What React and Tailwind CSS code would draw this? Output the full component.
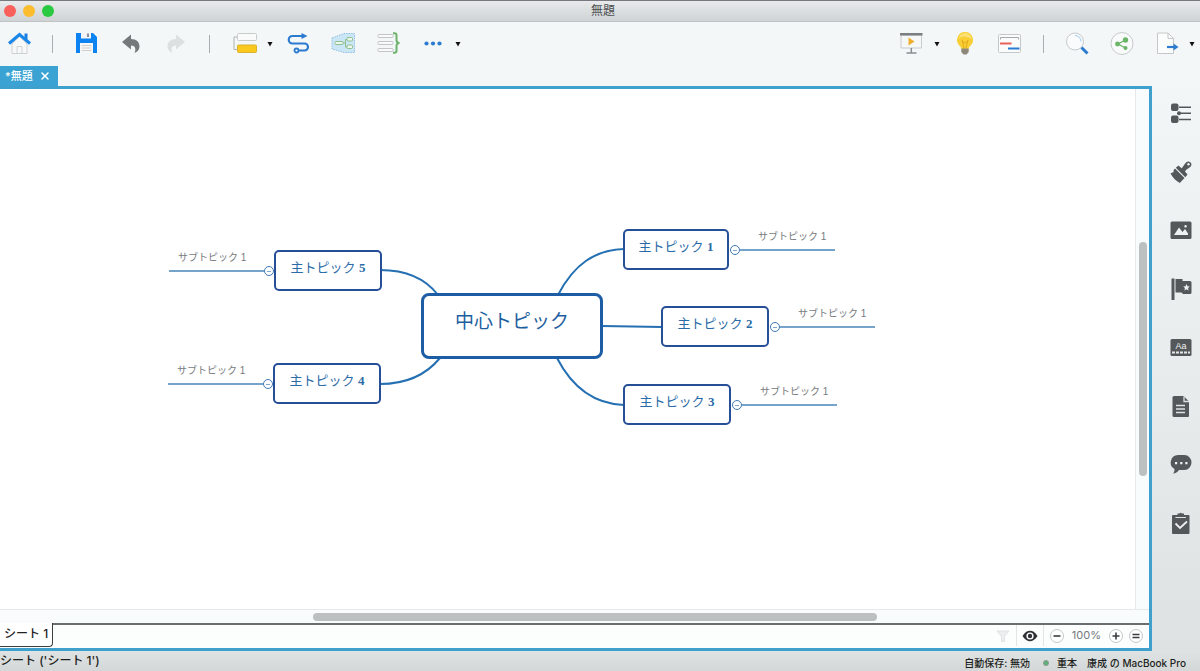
import { X } from "lucide-react";

const topics = [
  { id: 1, label: "主トピック", x: 623, y: 140, w: "w-[106px]" },
  { id: 2, label: "主トピック", x: 661, y: 217, w: "w-[108px]" },
  { id: 3, label: "主トピック", x: 623, y: 295, w: "w-[108px]" },
  { id: 4, label: "主トピック", x: 273, y: 274, w: "w-[108px]" },
  { id: 5, label: "主トピック", x: 274, y: 161, w: "w-[108px]" },
];

// x, y is the left end of the underline, cx the centre of the fold button
const subtopics = [
  { id: 1, x: 740, y: 161, cx: 735, pad: "pl-[18px]" },
  { id: 2, x: 780, y: 238, cx: 775, pad: "pl-[18px]" },
  { id: 3, x: 742, y: 316, cx: 737, pad: "pl-[18px]" },
  { id: 4, x: 168, y: 295, cx: 268, pad: "pl-[9px]" },
  { id: 5, x: 169, y: 182, cx: 269, pad: "pl-[9px]" },
];

function ToolButton({ label, children }) {
  return (
    <button type="button" aria-label={label} className="w-6 h-6 shrink-0">
      <svg viewBox="0 0 24 24" className="w-6 h-6" fill="none">
        {children}
      </svg>
    </button>
  );
}

function Caret({ label }) {
  return (
    <button type="button" aria-label={label} className="w-2 h-6 shrink-0 flex items-center justify-center">
      <svg viewBox="0 0 8 8" className="w-2 h-2">
        <path d="M1.5 2h5L4 6.5z" fill="#111" />
      </svg>
    </button>
  );
}

function Divider() {
  return <div className="w-px h-[18px] bg-[#a9adaf]" />;
}

function Toolbar() {
  return (
    <header className="h-11 flex items-center justify-between pl-[7px] pr-1">
      <div className="flex items-center">
        <div className="flex items-center gap-[21px]">
          <ToolButton label="ホーム">
            <path d="M5 12v9.5h15V12l-7.500-8z" fill="#f7f8f8" stroke="#cfd2d4" />
            <path d="M10 21.500v-7h5v7" stroke="#cfd2d4" />
            <path d="M17.500 1.500h3v6h-3z" fill="#1a7fe0" />
            <path d="M2 11.500 12.500 2.500 23 11.500" stroke="#1a86e8" strokeWidth="3" />
          </ToolButton>
          <Divider />
          <ToolButton label="保存">
            <path d="M2 1h17l4 4v16H2z" fill="#0d83f2" />
            <path d="M7 1h10v5.500H7z" fill="#f3f5f6" />
            <path d="M13 1.500h2V5h-2z" fill="#8a9298" />
            <path d="M6 11h13v10H6z" fill="#f6f7f7" />
            <path d="M7.500 13.500h10M7.500 16h10M7.500 18.500h10" stroke="#cfcfcf" />
          </ToolButton>
          <ToolButton label="元に戻す">
            <path d="M3 10 12 2.500v4.500c5.500 0 8.500 3 8.500 7.500 0 3-1.500 5-5 6.500 2-4.500.5-7.500-3.500-7.500v4z" fill="#75797b" />
          </ToolButton>
          <ToolButton label="やり直し">
            <path d="M21 10 12 2.500v4.500C6.500 7 3.500 10 3.500 14.500c0 3 1.500 5 5 6.500-2-4.500-.5-7.500 3.500-7.500v4z" fill="#dde0e1" />
          </ToolButton>
          <Divider />
        </div>

        <div className="flex items-center gap-3 pl-[23px]">
          <div className="flex items-center gap-[9px]">
            <ToolButton label="トピック">
              <path d="M5 5H1v12.500h4" stroke="#b0b3b5" />
              <rect x="4.500" y="1.500" width="19" height="7" rx="1" fill="#fafafa" stroke="#c9cccd" />
              <rect x="4.500" y="13" width="19" height="7.500" rx="1" fill="#fbc91d" stroke="#dbb12e" />
            </ToolButton>
            <Caret label="トピックのメニュー" />
          </div>
          <div className="flex items-center gap-[21px]">
            <ToolButton label="関連">
              <path d="M16 4H6.500a3.700 3.700 0 0 0 0 7.500h12a3.500 3.500 0 0 1 0 7H13" stroke="#2b7cd0" strokeWidth="2.200" />
              <path d="M15.500 1 21.500 4l-6 3z" fill="#2b7cd0" />
              <circle cx="10.500" cy="18.500" r="2" fill="#fff" stroke="#2b7cd0" strokeWidth="1.800" />
            </ToolButton>
            <ToolButton label="境界">
              <path d="M1 6 13 1.500h10.500v19H13L1 17z" fill="#cbe6f6" stroke="#8fbfe0" strokeDasharray="1.500 1" />
              <path d="M12 11h2.500M17 7.500h-2.500v7.500H17" stroke="#8cc08d" />
              <rect x="4" y="9.500" width="8" height="3" rx="1" fill="#eef7ee" stroke="#8cc08d" />
              <rect x="16" y="5.500" width="5.500" height="3.500" rx="1" fill="#eef7ee" stroke="#8cc08d" />
              <rect x="16" y="13" width="5.500" height="3.500" rx="1" fill="#eef7ee" stroke="#8cc08d" />
            </ToolButton>
            <ToolButton label="要約">
              <rect x="2" y="2.500" width="15" height="3" rx="1" fill="#fafafa" stroke="#c3c6c8" />
              <rect x="2" y="9.500" width="15" height="3" rx="1" fill="#fafafa" stroke="#c3c6c8" />
              <rect x="2" y="16.500" width="15" height="3" rx="1" fill="#fafafa" stroke="#c3c6c8" />
              <path d="M17 1.200h1.500q2 0 2 2v5q0 2.800 3 2.800-3 0-3 2.800v5q0 2-2 2H17" stroke="#6db36b" strokeWidth="2" />
            </ToolButton>
            <div className="flex items-center gap-[9px]">
              <ToolButton label="その他">
                <circle cx="5.500" cy="11.500" r="2.100" fill="#2b7cd0" />
                <circle cx="12" cy="11.500" r="2.100" fill="#2b7cd0" />
                <circle cx="18.500" cy="11.500" r="2.100" fill="#2b7cd0" />
              </ToolButton>
              <Caret label="その他のメニュー" />
            </div>
          </div>
        </div>
      </div>

      <div className="flex items-center gap-3">
        <div className="flex items-center gap-[9px]">
          <ToolButton label="プレゼンテーション">
            <path d="M1 3h20.500v13H1z" fill="#f6f7f7" stroke="#c9cccd" />
            <path d="M0 1h22.500v2.500H0z" fill="#7b7f82" />
            <path d="M8.500 5.500 14.500 9.500l-6 4z" fill="#eeae2c" />
            <path d="M11.300 16v5M6.500 21h10" stroke="#8a8e91" strokeWidth="1.500" />
          </ToolButton>
          <Caret label="プレゼンテーションのメニュー" />
        </div>
        <div className="flex items-center gap-[21px]">
          <ToolButton label="アイデア">
            <path d="M12 0a8 8 0 0 1 5 14.200c-1 .8-1.200 1.800-1.200 2.800H8.200c0-1-.2-2-1.200-2.800A8 8 0 0 1 12 0z" fill="#f9cf35" />
            <path d="M12 1a7 7 0 0 0-6.500 6c2-3.500 8-3.500 13 0a7 7 0 0 0-6.500-6z" fill="#fbe076" />
            <path d="m9 8 2 8M15 8l-2 8M9 9l3 2 3-2" stroke="#e5a91c" />
            <path d="M8.300 16.500h7.400v3.500L13.500 22.500h-3L8.300 20z" fill="#8c887c" />
          </ToolButton>
          <ToolButton label="ガントチャート">
            <rect x="0.500" y="2.500" width="22" height="18" rx="1" fill="#fafbfb" stroke="#c5c8ca" />
            <path d="M2.500 7.500V5.500h18v2" stroke="#a4a8ab" />
            <path d="M2 11.500h11.500" stroke="#e8605c" strokeWidth="2" />
            <path d="M10 16.500h11.500" stroke="#2b7cd0" strokeWidth="2" />
          </ToolButton>
          <Divider />
          <ToolButton label="検索">
            <circle cx="10" cy="9.500" r="8.500" fill="#f9fbfc" stroke="#c6cacc" />
            <path d="M10 3.500a6 6 0 0 1 6 6" stroke="#9ec8ec" />
            <path d="m16.500 15.500 6 6" stroke="#2b7cd0" strokeWidth="3" />
          </ToolButton>
          <ToolButton label="共有">
            <circle cx="12" cy="11.500" r="11" fill="#f9fbfb" stroke="#c6cacc" />
            <path d="M15.500 8 8 12l7.500 4" stroke="#6ab567" strokeWidth="1.300" />
            <circle cx="15.500" cy="8" r="2.700" fill="#6ab567" />
            <circle cx="7.500" cy="12" r="2.400" fill="#6ab567" />
            <circle cx="15.500" cy="16" r="2" fill="#6ab567" />
          </ToolButton>
          <div className="flex items-center gap-[9px]">
            <ToolButton label="エクスポート">
              <path d="M2.500 1h10.500l5.500 5.500V21.500h-16z" fill="#fbfcfc" stroke="#c5c8ca" />
              <path d="M13 1v5.500h5.500" stroke="#c5c8ca" />
              <path d="M12 15h7" stroke="#2b7cd0" strokeWidth="2.200" />
              <path d="M18.500 11.500 23.500 15 18.500 18.500z" fill="#2b7cd0" />
            </ToolButton>
            <Caret label="エクスポートのメニュー" />
          </div>
        </div>
      </div>
    </header>
  );
}

function SideButton({ label, children }) {
  return (
    <button type="button" aria-label={label} className="w-[22px] h-[22px]">
      <svg viewBox="0 0 22 22" className="w-[22px] h-[22px]" fill="#54585a">
        {children}
      </svg>
    </button>
  );
}

function SidePanel() {
  return (
    <aside className="w-12 shrink-0 flex flex-col items-center justify-between pl-[10px] pt-9 pb-[117px]">
      <SideButton label="アウトライン">
        <rect x="1" y="1.500" width="7.500" height="7.500" rx="2" />
        <rect x="1" y="13.500" width="7.500" height="7.500" rx="2" />
        <circle cx="9" cy="11.300" r="2" />
        <path d="M9 4.500h12v1.500H9zM9 10.500h12v1.500H9zM9 16.800h12v1.500H9z" />
      </SideButton>
      <SideButton label="書式">
        <path d="M.5 12.500 3.700 11l-.2-1.700L5 7.500 14.500 17l-4.700 5c-3.500-2-7-5-9.300-9.500z" />
        <path d="M5.800 6.700 8.500 4.500l3 2.800C14 5.500 14.500 1 18.500.5a3 3 0 0 1 2.500 4.500c-1 2-4.500 2.500-6 5.500l2.500 3-2.200 2.700z" />
        <circle cx="18.500" cy="3.200" r="1.200" fill="#edf0f1" />
      </SideButton>
      <SideButton label="画像">
        <path fillRule="evenodd" d="M2 2.500h18q1.500 0 1.500 1.500v14.500q0 1.500-1.500 1.500H2Q.5 20 .5 18.500V4Q.5 2.500 2 2.500zM4 16h14v-1.500l-3-4.500-2.500 3L9 8.500zM15.500 6a1.300 1.300 0 1 0 .1 0z" />
      </SideButton>
      <SideButton label="マーカー">
        <path d="M1.500.5h3v22h-3z" />
        <path d="M5.500 1h7v2h7.500q1.500 0 1.500 1.500v10q0 1.500-1.500 1.500H13L11.500 14.500h-6z" />
        <path d="m16.500 6 1 2.200 2.300.3-1.700 1.600.4 2.400-2-1.200-2 1.200.4-2.400-1.700-1.600 2.300-.3z" fill="#edf0f1" />
      </SideButton>
      <SideButton label="ラベル">
        <rect x="0.500" y="3" width="21" height="17" rx="1.500" />
        <text x="11" y="12.500" textAnchor="middle" fontSize="9" fontFamily="Liberation Sans, sans-serif" fill="#f0f2f3">
          Aa
        </text>
        <path d="M2 16.500h18" stroke="#e4e7e8" strokeWidth="2" strokeDasharray="3 1" />
      </SideButton>
      <SideButton label="ノート">
        <path d="M4 1h9.500l5.500 5.500v14.500q0 1-1 1H4q-1.500 0-1.500-1.500V2.500Q2.500 1 4 1z" />
        <path d="M14 1.500v5h5M6 10.500h9M6 14h9M6 17.500h9" fill="none" stroke="#dfe2e3" strokeWidth="1.300" />
      </SideButton>
      <SideButton label="コメント">
        <path d="M8 2h6.500a7 7.500 0 0 1 0 15H9c-1.500 2-3.500 3.500-6 3.500 1-1 1.500-2.500 1.500-4.500A7.500 7.500 0 0 1 8 2z" />
        <path d="M5 9h2.200v2.200H5zM10.200 9h2.200v2.200h-2.200zM15.300 9h2.200v2.200h-2.200z" fill="#f0f2f3" />
      </SideButton>
      <SideButton label="タスク">
        <path d="M3 3h4.500V1.500h2q1-1.500 2.500 0h2V3h4.500q1 0 1 1v17q0 1-1 1H3q-1 0-1-1V4q0-1 1-1z" />
        <path d="M5.500 5.500h10.500" stroke="#dfe2e3" />
        <path d="m5.500 11.500 4.500 4.500L17 9.500" fill="none" stroke="#eef0f1" strokeWidth="1.800" />
      </SideButton>
    </aside>
  );
}

function MindMap() {
  return (
    <div className="relative flex-1 bg-white overflow-hidden">
      <svg className="absolute left-0 top-0 w-full h-full" fill="none" stroke="#2470b2" strokeWidth="2">
        <path d="M558 206C574 175 595 161 624 160" />
        <path d="M602 237 662 238" />
        <path d="M557 269C573 300 596 315 624 316" />
        <path d="M380 295C405 295 426 286 440 269" />
        <path d="M380 181C405 181 425 189 438 206" />
      </svg>

      <div className="absolute left-[421px] top-[204px] w-[182px] h-[66px] rounded-lg border-[3px] border-[#1c5da5] bg-white flex items-center justify-center pb-2 text-[19px] leading-6 text-[#1f5f9f] font-['Liberation_Serif','Noto_Sans_CJK_JP',serif]">
        中心トピック
      </div>

      {topics.map((t) => (
        <div
          key={t.id}
          style={{ left: t.x, top: t.y }}
          className={`absolute ${t.w} h-[41px] rounded-[5px] border-2 border-[#274f97] bg-white flex items-center justify-center pb-[6px] text-[13px] leading-5 text-[#2b6ba8] whitespace-pre font-['Liberation_Serif','Noto_Sans_CJK_JP',serif]`}
        >
          {t.label} <b>{t.id}</b>
        </div>
      ))}

      {subtopics.map((s) => (
        <div key={s.id}>
          <div
            style={{ left: s.x, top: s.y - 21 }}
            className={`absolute w-[95px] h-[22px] border-b-2 border-[#76a3c9] ${s.pad} text-[10px] leading-4 text-[#777b80] whitespace-nowrap font-['Liberation_Sans','Noto_Sans_CJK_JP',sans-serif]`}
          >
            サブトピック 1
          </div>
          <button
            type="button"
            aria-label="折りたたむ"
            style={{ left: s.cx - 5, top: s.y - 5 }}
            className="absolute w-[10px] h-[10px] rounded-full border border-[#3f78b4] bg-white flex items-center justify-center"
          >
            <span className="w-1 h-px bg-[#7fa6cd]" />
          </button>
        </div>
      ))}
    </div>
  );
}

function RoundButton({ label, d }) {
  return (
    <button type="button" aria-label={label} className="w-[14px] h-[14px] rounded-full border border-[#c4c7c9] bg-white">
      <svg viewBox="0 0 12 12" className="w-3 h-3" stroke="#3a3d3f" strokeWidth="1.600">
        <path d={d} />
      </svg>
    </button>
  );
}

function SheetBar() {
  return (
    <div className="h-[25px] flex justify-between bg-[#fcfefe]">
      <button
        type="button"
        className="w-[53px] h-6 shrink-0 bg-white border-r border-b border-[#3c3f41] rounded-br text-xs text-[#222] font-medium text-left pl-1 pb-[2px] whitespace-nowrap"
      >
        シート 1
      </button>
      <div className="flex-1 border-t-2 border-[#6b6d6f] flex items-center justify-end pr-[6px] pb-[2px]">
        <button type="button" aria-label="フィルター" className="mr-[6px]">
          <svg viewBox="0 0 14 14" className="w-[14px] h-[14px]" fill="#eceff0" stroke="#e0e3e4">
            <path d="M1 2h12L8.500 7.500v5h-3v-5z" />
          </svg>
        </button>
        <div className="h-full border-x border-[#e2e5e6] px-[5px] flex items-center">
          <button type="button" aria-label="表示">
            <svg viewBox="0 0 16 12" className="w-4 h-3">
              <path d="M.5 6C3 2 5.500.8 8 .8S13 2 15.500 6C13 10 10.500 11.200 8 11.200S3 10 .5 6z" fill="#2f3234" />
              <circle cx="8" cy="6" r="3.600" fill="#fff" />
              <circle cx="8" cy="6" r="2.200" fill="#2f3234" />
            </svg>
          </button>
        </div>
        <div className="flex items-center gap-2 pl-[6px]">
          <RoundButton label="縮小" d="M2.500 6h7" />
          <span className="text-[11px] text-[#75797c]">100%</span>
          <RoundButton label="拡大" d="M2.500 6h7M6 2.500v7" />
        </div>
        <div className="pl-[6px] flex">
          <RoundButton label="実際のサイズ" d="M2.500 4.500h7M2.500 7.500h7" />
        </div>
      </div>
    </div>
  );
}

export default function App() {
  return (
    <div className="h-screen flex flex-col overflow-hidden bg-linear-to-b from-[#f4f7f8] from-10% to-[#dee1e2] font-['Inter','Noto_Sans_CJK_JP',sans-serif]">
      <div className="h-[22px] shrink-0 relative flex items-center border-t border-[#77797f] border-b border-b-[#bfc3c5] bg-linear-to-b from-[#e8eaeb] to-[#cfd3d5]">
        <div className="flex gap-[7px] pl-1">
          <button type="button" aria-label="閉じる" className="w-3 h-3 rounded-full bg-[#fa605b]" />
          <button type="button" aria-label="しまう" className="w-3 h-3 rounded-full bg-[#fbbd2e]" />
          <button type="button" aria-label="拡大表示" className="w-3 h-3 rounded-full bg-[#29c941]" />
        </div>
        <h1 className="absolute inset-x-0 text-center text-xs text-[#4c4f51] pointer-events-none pl-[6px]">無題</h1>
      </div>

      <Toolbar />

      <div className="flex-1 min-h-0 flex">
        <main className="flex-1 min-w-0 flex flex-col">
          <div className="h-5 flex">
            <div className="flex items-center gap-[6px] bg-[#3ba3d3] text-white px-[5px] w-[58px]">
              <span className="text-[11px] font-medium whitespace-nowrap">*無題</span>
              <button type="button" aria-label="タブを閉じる">
                <X size={12} strokeWidth={3} />
              </button>
            </div>
          </div>

          <div className="flex-1 min-h-0 flex flex-col border-[3px] border-l-0 border-[#3ea0cd] bg-[#f8fcfd]">
            <div className="flex-1 min-h-0 flex">
              <MindMap />
              <div className="w-[14px] border-l border-[#e5e9ea] flex flex-col items-center pt-[153px]">
                <div className="w-2 h-[234px] rounded-full bg-[#bdc0c1]" />
              </div>
            </div>
            <div className="h-[14px] border-t border-[#e5e9ea] flex items-center justify-center pl-[41px]">
              <div className="w-[564px] h-2 rounded-full bg-[#bdc0c1]" />
            </div>
            <SheetBar />
          </div>
        </main>
        <SidePanel />
      </div>

      <footer className="h-5 shrink-0 flex items-center justify-between pr-[14px] bg-linear-to-b from-[#e0e3e4] to-[#d3d7d8] text-[#1d1f20] font-medium">
        <span className="text-xs">シート ('シート 1')</span>
        <div className="flex items-center text-[10px] pt-1">
          <span>自動保存: 無効</span>
          <span className="w-[6px] h-[6px] rounded-full bg-[#5bb377] border border-[#8b9a90] ml-[13px] mr-2" />
          <span>重本　康成 の MacBook Pro</span>
        </div>
      </footer>
    </div>
  );
}
